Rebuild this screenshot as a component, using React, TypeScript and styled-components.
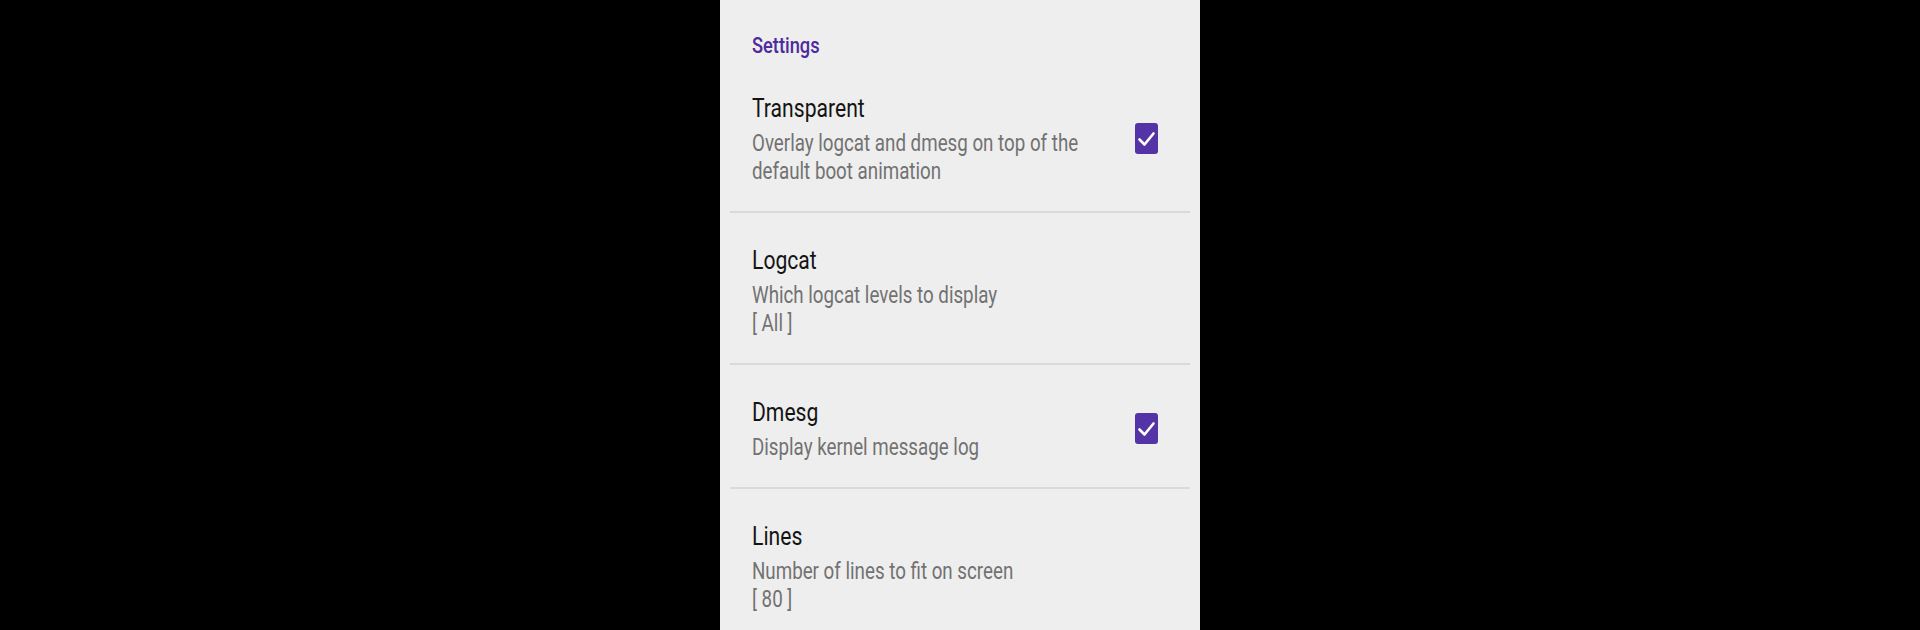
import { FC } from 'react';
import styled, { createGlobalStyle } from 'styled-components';

interface IPrefItem {
  title: string;
  lines: string[];
  checked?: boolean;
}

const items: IPrefItem[] = [
  { title: 'Transparent', lines: ['Overlay logcat and dmesg on top of the', 'default boot animation'], checked: true },
  { title: 'Logcat', lines: ['Which logcat levels to display', '[ All ]'] },
  { title: 'Dmesg', lines: ['Display kernel message log'], checked: true },
  { title: 'Lines', lines: ['Number of lines to fit on screen', '[ 80 ]'] },
];

const CheckBox: FC = () => (
  <Box>
    <svg width="23" height="31" viewBox="0 0 23 31">
      <rect x="0" y="0" width="23" height="31" rx="3" fill="#5333a6" />
      <path d="M4.5 16.5 L9.5 21.5 L18.5 10.5" fill="none" stroke="#ffffff" strokeWidth="2.6" strokeLinecap="round" strokeLinejoin="round" />
    </svg>
  </Box>
);

const App: FC = () => {
  return (
    <>
      <GlobalStyle />
      <Page>
        <Panel>
          <Header>
            <Narrow $scale={0.83}>Settings</Narrow>
          </Header>
          {items.map((item, index) => (
            <div key={item.title}>
              {index > 0 && <Divider />}
              <Row>
                <TextWrapper>
                  <Title>
                    <Narrow $scale={0.845}>{item.title}</Narrow>
                  </Title>
                  <Summary>
                    {item.lines.map((line) => (
                      <Narrow key={line} $scale={0.815}>{line}</Narrow>
                    ))}
                  </Summary>
                </TextWrapper>
                {item.checked && <CheckBox />}
              </Row>
            </div>
          ))}
        </Panel>
      </Page>
    </>
  );
};

export default App;

const GlobalStyle = createGlobalStyle`
  html, body {
    margin: 0;
    padding: 0;
    background: #000000;
  }
`;

const Page = styled.div`
  display: flex;
  justify-content: center;
  width: 100%;
  height: 630px;
  overflow: hidden;
  background: #000000;
`;

const Panel = styled.div`
  width: 480px;
  height: 630px;
  background: #eeeeee;
  font-family: Roboto, "Noto Sans", sans-serif;
  overflow: hidden;
`;

const Narrow = styled.span<{ $scale: number }>`
  display: block;
  white-space: nowrap;
  transform: scaleX(${(p) => p.$scale});
  transform-origin: left top;
`;

const Header = styled.div`
  padding: 34px 32px 3px;
  font-size: 22px;
  line-height: 24px;
  font-weight: 500;
  color: #4d2b9c;
`;

const Divider = styled.div`
  height: 2px;
  margin: 0 10px;
  background: #dadada;
`;

const Row = styled.div`
  display: flex;
  align-items: center;
  gap: 16px;
  padding: 33px 42px 25px 32px;
`;

const TextWrapper = styled.div`
  display: flex;
  flex-direction: column;
  flex: 1;
  min-width: 0;
  gap: 6px;
`;

const Title = styled.div`
  font-size: 25px;
  line-height: 30px;
  color: #141414;
`;

const Summary = styled.div`
  font-size: 23px;
  line-height: 28px;
  color: #727272;
`;

const Box = styled.div`
  display: flex;
  flex-shrink: 0;
  width: 23px;
  height: 31px;
  margin-top: -4px;
`;
